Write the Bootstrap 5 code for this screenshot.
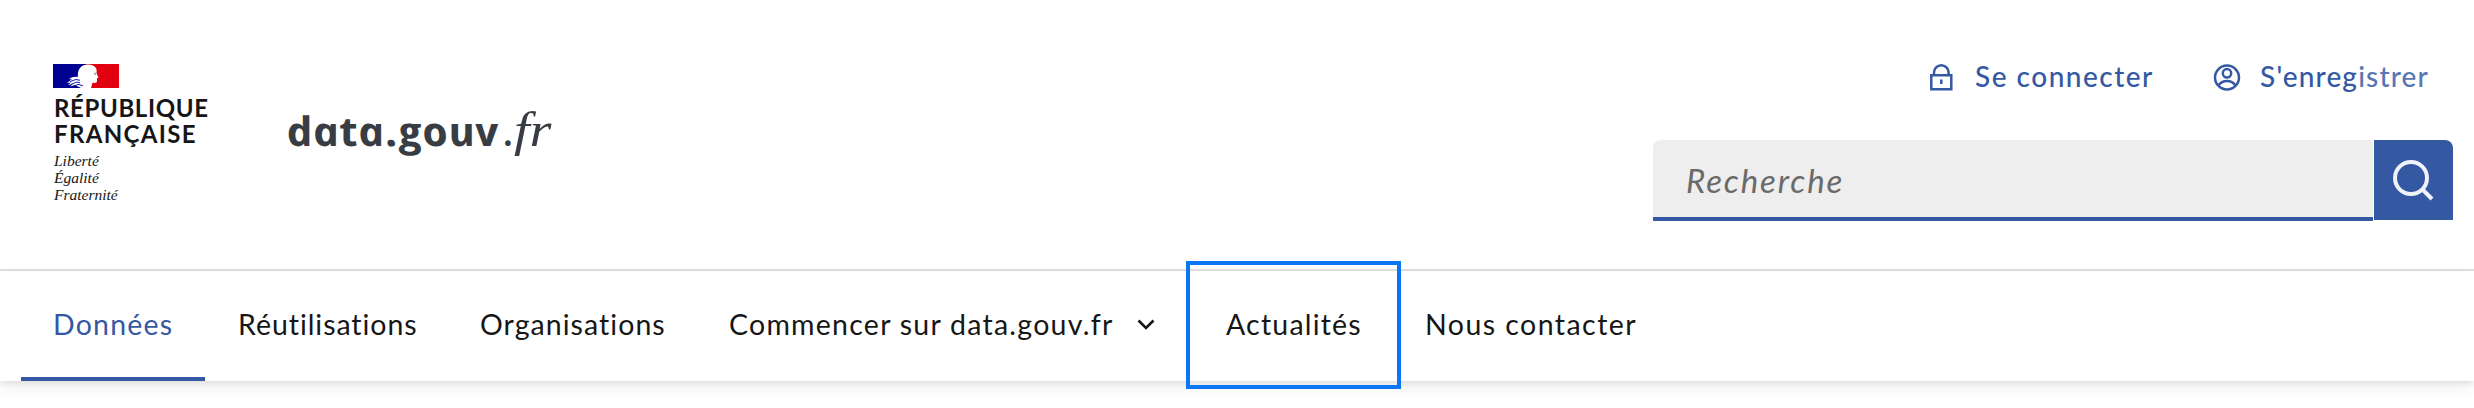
<!DOCTYPE html>
<html lang="fr">
<head>
<meta charset="utf-8">
<title>data.gouv.fr</title>
<link href="https://cdn.jsdelivr.net/npm/bootstrap@5.3.0/dist/css/bootstrap.min.css" rel="stylesheet">
<style>
:root{--brand:#3558a2;--ink:#161616}
body{background:#fff;color:var(--ink);font-family:Lato,"Liberation Sans",sans-serif;min-height:408px}
a{text-decoration:none;color:inherit}
.top-zone{height:269px;padding:0 21px 0 53px}
.gov-logo{width:236px;padding-top:64px}
.gov-logo svg{display:block}
.gov-name{margin-top:7px;font-weight:700;font-size:24px;line-height:26px;white-space:nowrap;padding-left:1px}
.gov-name .l1{letter-spacing:.63px}
.gov-name .l2{letter-spacing:1.35px}
.gov-motto{margin-top:5px;padding-left:1px;font:italic 15.500px/17px "Liberation Serif",serif}
.site-name{padding-top:110px;line-height:40px;color:#383d43;white-space:nowrap}
.site-word{font:italic 700 40.500px/40px "Open Sans",sans-serif;transform:scaleX(1.085) skewX(12deg);transform-origin:0 88%;letter-spacing:.5px;width:214px}
.site-dot{font:italic 48px/40px "Liberation Serif",serif;width:10px;margin-right:1px}
.site-tld{font:italic 48px/40px "Liberation Serif",serif;transform:scaleX(1.17);transform-origin:0 0}
.tools{width:800px}
.quick{padding:59px 23px 0 0;height:140px;color:var(--brand);font-weight:500;font-size:28px;line-height:34px}
.quick-a{width:285px}
.quick-b{width:216px}
.quick svg{margin-left:-2px;margin-right:18px}
.lab1{letter-spacing:1.500px}
.lab2{letter-spacing:1.150px}
.soft{color:#5876b4}
.search-field{width:720px;height:81px;background:#eee;border:0;border-bottom:4px solid var(--brand);border-radius:8px 0 0 0;padding:2px 32px 0 33px;font-size:33px;font-style:italic;letter-spacing:1.900px;outline:0}
.search-field::placeholder{color:#6a6a6a;opacity:1}
.search-btn{width:79px;height:80px;margin-left:1px;background:var(--brand);border:0;border-radius:0 8px 0 0;padding:0}
.main-nav{height:112px;border-top:2px solid #ddd;padding-left:21px;box-shadow:0 3px 5px rgba(0,0,0,.08),0 8px 16px rgba(0,0,0,.055);font-size:28.500px;line-height:34px}
.entry{height:110px;padding:0 0 4px 32px;white-space:nowrap;position:relative}
.entry.current{color:var(--brand);box-shadow:inset 0 -4px var(--brand)}
.entry.focused::after{content:"";position:absolute;inset:-10px -9px -8px -8px;border:4px solid #0a76f6}
.w1{width:184px;letter-spacing:1.200px}
.w2{width:243px;letter-spacing:.950px}
.w3{width:249px;letter-spacing:1.050px}
.w4{width:497px;letter-spacing:1.250px}
.w5{width:198px;letter-spacing:1.200px}
.w6{width:276px;letter-spacing:1.450px}
.w2,.w6{padding-left:33px}
.chev{margin:2px 0 0 23px}
</style>
</head>
<body>
<header>
  <div class="top-zone d-flex align-items-start">
    <a href="#" class="gov-logo">
      <svg width="66" height="24" viewBox="0 0 66 24">
        <path fill="#000091" d="M0 0h33v24H0z"/><path fill="#e1000f" d="M33 0h33v24H33z"/>
        <path fill="#fff" d="M27 4C29 1 32 .5 35 .5S41.500 1.500 43 4c1 2 .5 4 .6 5.500l1.900 4-1.500.8v3c0 1.800-2 1.700-4.500 1.500L38 24H28l-6-3-5 1.500L20 20l-5 1 3-2.500-4 .5 5-4-3 .3c3-2.500 6-2.800 9-2.300C24.500 10 25 6.500 27 4z"/>
        <path fill="none" stroke="#000091" stroke-width=".9" d="M17 17.500l6-2 4 .8M18 20.300l6-2.300 3 .8M21 22.300l4-2 5 1.500"/>
        <path fill="none" stroke="#777" stroke-width=".9" d="M41 9l2 .5M41.700 10.500l1 .3"/>
      </svg>
      <div class="gov-name"><div class="l1">RÉPUBLIQUE</div><div class="l2">FRANÇAISE</div></div>
      <div class="gov-motto">Liberté<br>Égalité<br>Fraternité</div>
    </a>
    <a href="#" class="site-name d-flex align-items-baseline"><span class="site-word">data.gouv</span><span class="site-dot">.</span><span class="site-tld">fr</span></a>
    <div class="tools ms-auto">
      <div class="quick d-flex justify-content-end">
        <a href="#" class="quick-a d-flex">
          <svg width="30" height="34" viewBox="0 0 30 34" fill="none" stroke="#3558a2" stroke-width="2.500"><path d="M4.300 16.300h20v14h-20zM7 16V13.500a7.300 7.300 0 0 1 14.600 0V16M14.300 20.500v4.500"/></svg>
          <span class="lab1">Se connecter</span></a>
        <a href="#" class="quick-b d-flex">
          <svg width="30" height="34" viewBox="0 0 30 34" fill="none" stroke="#3558a2" stroke-width="2.500"><circle cx="15" cy="18.500" r="12"/><circle cx="15" cy="14.300" r="4.200"/><path d="M6.500 26.500c4-6 13-6 17 0"/></svg>
          <span class="lab2">S'enreg<span class="soft">istrer</span></span></a>
      </div>
      <form class="d-flex">
        <input class="search-field" type="text" placeholder="Recherche" aria-label="Recherche">
        <button class="search-btn" type="button" aria-label="Rechercher"><svg class="d-block" width="79" height="80" viewBox="0 0 79 80" fill="none" stroke="#f1f3fa" stroke-width="4"><circle cx="37" cy="38" r="16"/><path d="M48.500 49.500l9.500 9.500"/></svg></button>
      </form>
    </div>
  </div>
  <nav class="main-nav d-flex">
    <a href="#" class="entry w1 current d-flex align-items-center">Données</a>
    <a href="#" class="entry w2 d-flex align-items-center">Réutilisations</a>
    <a href="#" class="entry w3 d-flex align-items-center">Organisations</a>
    <a href="#" class="entry w4 d-flex align-items-center">Commencer sur data.gouv.fr<svg class="chev" width="18" height="12" viewBox="0 0 18 12" fill="none" stroke="#161616" stroke-width="2.600"><path d="M1.500 1.500L9 9l7.500-7.500"/></svg></a>
    <a href="#" class="entry w5 focused d-flex align-items-center">Actualités</a>
    <a href="#" class="entry w6 d-flex align-items-center">Nous contacter</a>
  </nav>
</header>
</body>
</html>
